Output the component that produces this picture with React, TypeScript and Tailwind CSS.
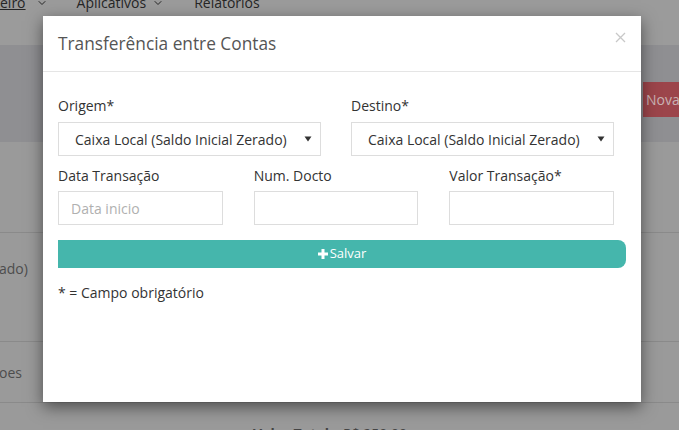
import { ChevronDown } from "lucide-react";

const font = { fontFamily: '"Open Sans", "Liberation Sans", sans-serif' };

function FakeSelect({ value }: { value: string }) {
  return (
    <div className="flex h-[34px] items-center justify-between border border-[#ddd] bg-white pl-[16px] pr-[8px] text-[14px] text-[#333]">
      <span>{value}</span>
      <svg width="8" height="6" viewBox="0 0 8 6" className="text-[#333]">
        <path d="M0.5 0.5 L7.5 0.5 L4 5.5 Z" fill="currentColor" />
      </svg>
    </div>
  );
}

function Field({
  label,
  placeholder,
}: {
  label: string;
  placeholder?: string;
}) {
  return (
    <div className="flex flex-col">
      <label className="mb-[5px] text-[14px] leading-[20px] text-[#333]">
        {label}
      </label>
      <input
        placeholder={placeholder}
        className="h-[34px] w-full border border-[#ddd] px-[12px] text-[14px] text-[#333] outline-none placeholder:text-[#b0b0b0]"
      />
    </div>
  );
}

export default function App() {
  return (
    <div className="relative flex h-[430px] w-[679px] flex-col overflow-hidden bg-[#9a9a9a]" style={font}>
      {/* página por trás, já escurecida pelo backdrop */}
      <div className="flex h-[45px] shrink-0 items-start bg-[#9b9b9b]">
        <div className="-mt-[7px] flex items-center text-[14px] leading-[20px] text-[#262626]">
          <span className="flex items-center gap-[10px]">
            <span className="underline">eiro</span>
            <ChevronDown className="h-3 w-3" />
          </span>
          <span className="ml-[29px] flex items-center gap-[6px]">
            Aplicativos
            <ChevronDown className="h-3 w-3" />
          </span>
          <span className="ml-[30px]">Relatórios</span>
        </div>
      </div>
      <div className="flex h-[97px] shrink-0 items-start justify-end bg-[#8f8f92] pt-[37px]">
        <span className="flex h-[35px] w-[36px] items-center overflow-hidden bg-[#9c454b] pl-[3px] text-[14px] text-[#c9b2b3]">
          Nova
        </span>
      </div>
      <div className="h-[91px] shrink-0 border-b border-[#8a8a8a]" />
      <div className="flex h-[109px] shrink-0 items-start border-b border-[#8a8a8a] pt-[26px] text-[14px] leading-[20px] text-[#4d4d4d]">
        <span className="-ml-[1px]">ado)</span>
      </div>
      <div className="flex h-[61px] shrink-0 items-center border-b border-[#8a8a8a] text-[14px] text-[#4d4d4d]">
        <span className="-ml-[1px]">oes</span>
      </div>
      <div className="flex shrink-0 pl-[253px] pt-[21px] text-[14px] leading-[20px] text-[#444]">
        <span className="font-bold">Valor Total:</span>
        <span className="ml-[10px]">R$ 250,00</span>
      </div>

      {/* modal */}
      <div className="absolute left-[43px] top-[16px] h-[386px] w-[598px] bg-white shadow-[0_5px_15px_rgba(0,0,0,0.5)]">
        <div className="relative flex h-[56px] items-center border-b border-[#e5e5e5] px-[15px]">
          <h4 className="text-[17.3px] leading-[25px] text-[#555]">Transferência entre Contas</h4>
          <button className="absolute right-[14px] top-[15px] p-[1px] text-[#c8c8c8]">
            <svg width="11" height="11" viewBox="0 0 11 11">
              <path d="M1 1 L10 10 M10 1 L1 10" stroke="currentColor" strokeWidth="1.3" />
            </svg>
          </button>
        </div>

        <div className="px-[15px] pt-[24px]">
          <div className="grid w-[556px] grid-cols-2 gap-x-[30px]">
            <div className="flex flex-col">
              <label className="mb-[6px] text-[14px] leading-[20px] text-[#333]">Origem*</label>
              <FakeSelect value="Caixa Local (Saldo Inicial Zerado)" />
            </div>
            <div className="flex flex-col">
              <label className="mb-[6px] text-[14px] leading-[20px] text-[#333]">Destino*</label>
              <FakeSelect value="Caixa Local (Saldo Inicial Zerado)" />
            </div>
          </div>

          <div className="mt-[10px] grid w-[556px] grid-cols-3 gap-x-[31px]">
            <Field label="Data Transação" placeholder="Data inicio" />
            <Field label="Num. Docto" />
            <Field label="Valor Transação*" />
          </div>

          <button className="mt-[15px] flex h-[28px] w-[568px] items-center justify-center gap-[2px] rounded-r-[8px] bg-[#45b6ac] text-[13px] text-white">
            <svg width="10" height="10" viewBox="0 0 10 10">
              <path d="M3.5 0 H6.5 V3.5 H10 V6.5 H6.5 V10 H3.5 V6.5 H0 V3.5 H3.5 Z" fill="currentColor" />
            </svg>
            Salvar
          </button>

          <p className="mt-[15px] text-[14px] leading-[20px] text-[#333]">* = Campo obrigatório</p>
        </div>
      </div>
    </div>
  );
}
